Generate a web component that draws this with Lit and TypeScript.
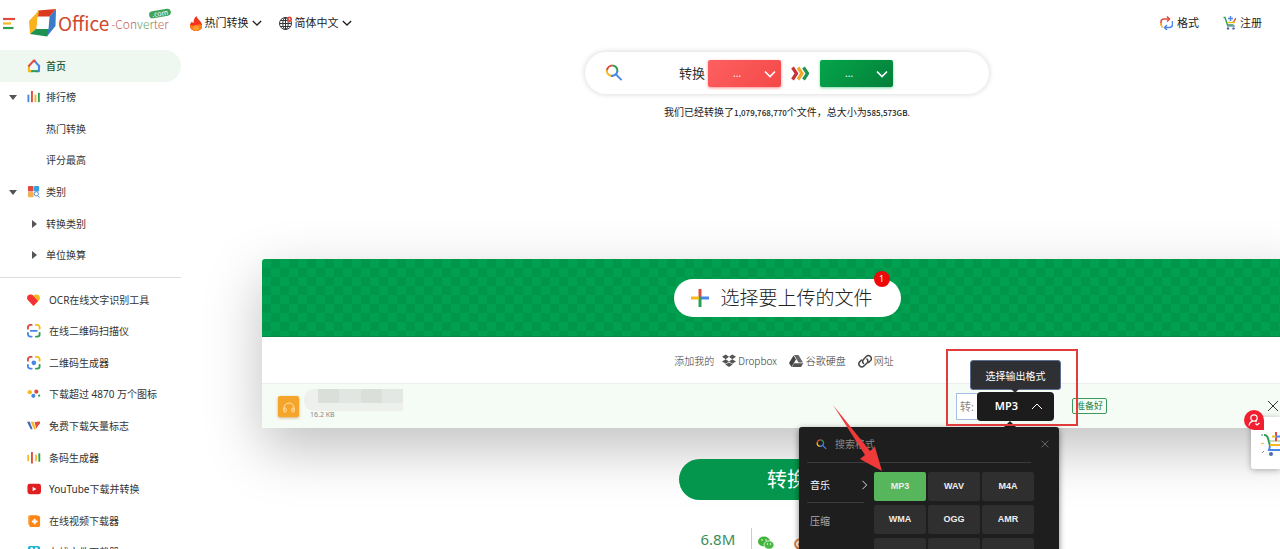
import { LitElement, html, css, svg, type TemplateResult } from "lit";
import { customElement, property, state } from "lit/decorators.js";
import { classMap } from "lit/directives/class-map.js";

const RED = "#e04a3f";
const YELLOW = "#f5b81f";
const GREEN = "#2f9e52";
const BLUE = "#4a86e8";

const icons: Record<string, TemplateResult> = {
  menu: svg`<path d="M0 3h12" stroke=${RED} stroke-width="2.200"/><path d="M0 7.500h8" stroke=${YELLOW} stroke-width="2.200"/><path d="M0 12h10.500" stroke=${GREEN} stroke-width="2.200"/>`,
  fire: svg`<path d="M7.500 0C8 3 12 4.500 13 8.500C14 12 11 15 7 15C3 15 0.500 12 1 9C1.300 7.200 2.300 6.500 3 5.500C3.500 6.500 4 7 4.600 7C4.500 4 5.500 1.500 7.500 0Z" fill="#f4351c"/><path d="M1 9C2.500 9.500 4 10 6 9.500C8.500 9 9.500 8 13 9C14 12 11 15 7 15C3 15 0.700 12.500 1 9Z" fill="#ff7a1a"/><ellipse cx="7" cy="12" rx="3" ry="2.500" fill="#ff9d2e"/>`,
  globe: svg`<g fill="none" stroke="#333" stroke-width="1"><circle cx="6.500" cy="7.500" r="6"/><ellipse cx="6.500" cy="7.500" rx="2.700" ry="6"/><path d="M.5 7.500h12M6.500 1.500v12M1.500 4.500h10M1.500 10.500h10"/></g><circle cx="10.500" cy="3" r="2.500" fill="${RED}"/><path d="M8.500 4l2 3l2-3z" fill="${RED}"/><circle cx="10.500" cy="3" r=".8" fill="#fff"/>`,
  home: svg`<g fill="none" stroke-width="2.200" stroke-linejoin="round"><path d="M12.800 7.500V13H10" stroke="${BLUE}"/><path d="M7.500 1.500L13 7.500V9" stroke="${BLUE}"/><path d="M11.500 13H3" stroke="${GREEN}"/><path d="M2 7V13H4.500" stroke="${YELLOW}"/><path d="M1.500 8L7.500 1.500L9 3" stroke="${RED}"/></g>`,
  bars: svg`<path d="M1.500 5v8" stroke="${BLUE}" stroke-width="2"/><path d="M5.300 1v12" stroke="${RED}" stroke-width="2"/><path d="M9 5v8" stroke="${YELLOW}" stroke-width="2"/><path d="M12.700 3v10" stroke="${GREEN}" stroke-width="2"/>`,
  grid: svg`<rect x="1" y="1" width="6" height="6" rx="1" fill="${RED}"/><rect x="7.500" y="1" width="5.500" height="6" rx="1" fill="#36a3e0"/><rect x="1" y="7.500" width="6" height="5.500" rx="1" fill="#f2b053"/><circle cx="10" cy="9.500" r="2.300" fill="#fff" stroke="#4a86c8"/><path d="M11.500 11.500l2 2" stroke="#4a86c8"/>`,
  heart: svg`<path d="M7 14L1 7.500C-1 4.500 1 1.500 4 1.500C5.500 1.500 6.500 2.300 7 3C8 1.800 9 1.500 10.300 1.500C13.500 1.500 15 5 13 7.500Z" fill="#f4b81f"/><path d="M7 14L1 7.500C-1 4.500 1 1.500 4 1.500C5.500 1.500 6.500 2.300 7 3.500L11.800 8.500Z" fill="#f72f38"/>`,
  scan: svg`<g fill="none" stroke-width="2" stroke-linecap="round"><path d="M1 5V3.500A2.500 2.500 0 0 1 3.500 1H5" stroke="${RED}"/><path d="M9.500 1H11A2.500 2.500 0 0 1 13.500 3.500V5" stroke="${YELLOW}"/><path d="M1 9.500V11A2.500 2.500 0 0 0 3.500 13.500H5" stroke="${BLUE}"/><path d="M9.500 13.500H11A2.500 2.500 0 0 0 13.500 11V9.500" stroke="${GREEN}"/><path d="M4 7.300h6.500" stroke="${BLUE}"/></g>`,
  lens: svg`<g fill="none" stroke-width="2" stroke-linecap="round"><path d="M1 5V3.500A2.500 2.500 0 0 1 3.500 1H5" stroke="${RED}"/><path d="M9.500 1H11A2.500 2.500 0 0 1 13.500 3.500V5" stroke="${YELLOW}"/><path d="M1 9.500V11A2.500 2.500 0 0 0 3.500 13.500H5" stroke="${BLUE}"/><path d="M9.500 13.500H11A2.500 2.500 0 0 0 13.500 11V9.500" stroke="${GREEN}"/></g><circle cx="7.300" cy="7.300" r="2.500" fill="${BLUE}"/>`,
  dots: svg`<circle cx="3" cy="5.500" r="2.300" fill="${YELLOW}"/><circle cx="10" cy="5" r="2.200" fill="${RED}"/><circle cx="6.800" cy="9.500" r="2.200" fill="${BLUE}"/><circle cx="13" cy="9.300" r="1.200" fill="${GREEN}"/>`,
  vector: svg`<path d="M0 3h3l3 8H4z" fill="#3f66b8"/><path d="M4 3h3l2.500 8H7.500z" fill="${YELLOW}"/><path d="M8 3c2 1 3-1 6 0c.5 2-1 3-2 4l-2 3.500z" fill="${RED}"/>`,
  barcode: svg`<path d="M1.300 4v7M9.700 4v7" stroke="${YELLOW}" stroke-width="1.800"/><path d="M5.300 1v12.500" stroke="${RED}" stroke-width="2"/><path d="M13.200 2.500v9" stroke="${GREEN}" stroke-width="2"/>`,
  youtube: svg`<rect x=".5" y="2" width="14.500" height="11" rx="2.500" fill="#e02020"/><path d="M6 5l4 2.500L6 10z" fill="#fff"/>`,
  download: svg`<rect x="1" y="1" width="11" height="11" rx="2" fill="#f8b36a"/><rect x="2.500" y="2" width="11.500" height="12" rx="2" fill="#ff8410"/><path d="M8.200 5v6M5.200 8h6" stroke="#fff" stroke-width="2"/>`,
  cyan: svg`<rect x="1" y="1" width="13" height="13" rx="2" fill="#1fb5d6"/><circle cx="5" cy="4" r="1.500" fill="#fff"/><circle cx="10" cy="4" r="1.500" fill="#fff"/><path d="M4 9h7" stroke="#fff" stroke-width="2"/>`,
  cycle: svg`<g fill="none" stroke-width="1.500"><path d="M1 9V6a3 3 0 0 1 3-3h5" stroke="${RED}"/><path d="M7 .5L9.500 3L7 5.500" stroke="${RED}"/><path d="M1 7v2l1.500 2.500" stroke="${YELLOW}"/><path d="M12.500 5v3.500a3 3 0 0 1-3 3H5" stroke="${BLUE}"/><path d="M7 9L4.500 11.500L7 14" stroke="${BLUE}"/></g>`,
  cart: svg`<g fill="none" stroke-width="1.400"><path d="M.5 1.500h1.500L4.500 9h6" stroke="${GREEN}"/><path d="M4 6.500h8" stroke="${YELLOW}"/><path d="M10.500 6L13 2" stroke="${RED}"/><path d="M7.500 0v5M5 2.500h5" stroke="${BLUE}"/><path d="M4 10h8" stroke="#6c8fb5"/></g><circle cx="5" cy="12.500" r="1.200" fill="#4f6f9c"/><circle cx="10.500" cy="12.500" r="1.200" fill="#4f6f9c"/>`,
  bigCart: svg`<g fill="none" stroke-width="2"><path d="M3 2C7 2 7 5 9 13" stroke="${GREEN}"/><path d="M8 8h16" stroke="#9bb36a" stroke-width="1"/><path d="M9 12h16" stroke="${YELLOW}"/><path d="M9 13l-1 4h18" stroke="${BLUE}"/><path d="M15 -1v9" stroke="${RED}"/><path d="M11 3.500h4" stroke="${YELLOW}"/><path d="M15 3.500h5" stroke="${BLUE}"/></g><circle cx="10" cy="21" r="2" fill="#466fae"/><circle cx="22" cy="21" r="2" fill="#466fae"/><path d="M0 2h2" stroke="${GREEN}"/><path d="M0 11l3-1" stroke="${YELLOW}"/><path d="M1 20l2-2" stroke="#7d93b5"/>`,
  search: svg`<g fill="none" stroke-width="2.200"><path d="M2 7A6 6 0 0 1 8 1.500" stroke="${RED}"/><path d="M8 1.500A5.500 5.500 0 0 1 13 8" stroke="${GREEN}"/><path d="M13 7.500A5.500 5.500 0 0 1 6 12.300" stroke="${BLUE}"/><path d="M6.500 12.500A5.500 5.500 0 0 1 2 6.500" stroke="${YELLOW}"/><path d="M11.500 11L17.500 17" stroke="${BLUE}" stroke-width="2"/></g>`,
  arrows: svg`<g fill="none" stroke-width="3.200"><path d="M1.500 1.500l4 6l-4 6" stroke="#c8323c"/><path d="M7 1.500l4 6l-4 6" stroke="#f0a82a"/><path d="M12.500 1.500l4 6l-4 6" stroke="#1f9150"/></g>`,
  plus: svg`<g stroke-width="3"><path d="M9 0v9" stroke="${RED}"/><path d="M18 9H9" stroke="${BLUE}"/><path d="M9 18V8" stroke="${GREEN}"/><path d="M0 9h8" stroke="${YELLOW}"/></g>`,
  dropbox: svg`<path d="M4 0L7.500 2.500L4 5L0 2.500zM11 0L7.500 2.500L11 5L15 2.500zM0 7.500L4 5L7.500 7.500L4 10zM15 7.500L11 5L7.500 7.500L11 10zM3.500 10.800L7.500 8.500L11.500 10.800L7.500 13.500z" fill="#555"/>`,
  drive: svg`<path d="M5 1h4.500l4.500 7.500H9.500z" fill="#666"/><path d="M4.500 1.500L7 5.500L2.500 13L0 9z" fill="#444"/><path d="M5 9.300h9.300L12 13H3z" fill="#555"/>`,
  link: svg`<g fill="none" stroke="#444" stroke-width="1.500" stroke-linecap="round"><path d="M5.500 9.500a3 3 0 0 1 0-4L8.500 2.300a3 3 0 0 1 4.200 4.200L10.500 8.500"/><path d="M9 5a3 3 0 0 1 0 4L5.700 12.200A3 3 0 0 1 1.500 8L3.500 6"/></g>`,
  headphones: svg`<path d="M3 11V9a5 5 0 0 1 10 0v2" fill="none" stroke="#ffe2b0" stroke-width="1"/><rect x="2.800" y="9" width="2.300" height="4" rx="1" fill="none" stroke="#ffe2b0"/><rect x="10.900" y="9" width="2.300" height="4" rx="1" fill="none" stroke="#ffe2b0"/>`,
  user: svg`<g fill="none" stroke="#fff" stroke-width="1.200"><circle cx="7" cy="5" r="3.200"/><path d="M2 12.500C2.500 10 4 8.500 6 8.200M8.500 8L9.500 9M8.500 10.500l1.500 1.500l2.500-2"/></g>`,
  close: svg`<path d="M1 1l10 10M11 1L1 11" stroke="currentColor" fill="none"/>`,
  down: svg`<path d="M1 3.500l5 5l5-5" stroke="currentColor" stroke-width="1.600" fill="none"/>`,
  up: svg`<path d="M1 9l5-5l5 5" stroke="currentColor" fill="none"/>`,
  right: svg`<path d="M3 1l5 5l-5 5" stroke="currentColor" fill="none"/>`,
  caretDown: svg`<path d="M0 1h8L4 6z" fill="#555"/>`,
  caretRight: svg`<path d="M1 0v8l5-4z" fill="#555"/>`,
  logo: svg`<path d="M9 1.500L27 0L20.500 7.500H8z" fill="#d93a20"/><path d="M10 1.500L9 8L7.500 19.500L1 25L0 12z" fill="#f9b21c"/><path d="M27 0L26.500 17L18 27.500V20L20.500 7.500z" fill="#3a7bc8"/><path d="M1 25L7.500 19.500H19.500L18 27.500z" fill="#1f9150"/><path d="M8.500 8H20.500L19.500 20H7.500z" fill="#fff"/>`,
  wechat: svg`<ellipse cx="6" cy="5.500" rx="6" ry="5" fill="#3fb33a"/><ellipse cx="11" cy="9" rx="5" ry="4.200" fill="#49b944" stroke="#fff" stroke-width=".7"/><circle cx="4" cy="4" r=".8" fill="#fff"/><circle cx="8" cy="4" r=".8" fill="#fff"/><circle cx="9.500" cy="8" r=".7" fill="#fff"/><circle cx="12.500" cy="8" r=".7" fill="#fff"/>`,
  weibo: svg`<ellipse cx="7" cy="8" rx="6" ry="5" fill="none" stroke="#e0803a" stroke-width="2"/><circle cx="6" cy="8.500" r="2" fill="#e0803a"/><path d="M8 1a5 5 0 0 1 6 5" fill="none" stroke="#e0803a" stroke-width="1.500"/>`,
};

const icon = (name: string, width: number, height: number, box = `0 0 ${width} ${height}`) =>
  html`<svg class="icon" width=${width} height=${height} viewBox=${box} aria-hidden="true">${icons[name]}</svg>`;

interface NavItem {
  label: string;
  icon?: string;
  caret?: "down" | "right";
  active?: boolean;
}

const mainNav: NavItem[] = [
  { label: "首页", icon: "home", active: true },
  { label: "排行榜", icon: "bars", caret: "down" },
  { label: "热门转换" },
  { label: "评分最高" },
  { label: "类别", icon: "grid", caret: "down" },
  { label: "转换类别", caret: "right" },
  { label: "单位换算", caret: "right" },
];

const toolNav: NavItem[] = [
  { label: "OCR在线文字识别工具", icon: "heart" },
  { label: "在线二维码扫描仪", icon: "scan" },
  { label: "二维码生成器", icon: "lens" },
  { label: "下载超过 4870 万个图标", icon: "dots" },
  { label: "免费下载矢量标志", icon: "vector" },
  { label: "条码生成器", icon: "barcode" },
  { label: "YouTube下载并转换", icon: "youtube" },
  { label: "在线视频下载器", icon: "download" },
  { label: "在线文件下载器", icon: "cyan" },
];

const base = css`
  * { box-sizing: border-box; }
  a { color: inherit; text-decoration: none; }
  button, input, select { font: inherit; color: inherit; border: 0; padding: 0; margin: 0; background: none; }
  button, select { cursor: pointer; }
  .icon { display: block; flex: none; }
`;

@customElement("site-header")
class SiteHeader extends LitElement {
  static styles = [base, css`
    :host { display: block; }
    .bar { display: flex; align-items: center; height: 46px; padding: 0 18px 0 3px; font-size: 11px; color: #222; }
    .logo { position: relative; display: flex; align-items: center; margin-left: 14px; font-family: "Noto Sans CJK SC", sans-serif; }
    .name { margin-left: 2px; font-size: 19px; line-height: 28px; color: #cf4a2c; }
    .tail { margin: 2px 0 0 2px; font-size: 12px; font-weight: 300; color: #c4665a; }
    .tail b { font-weight: 300; color: #5ba268; }
    .com { position: absolute; right: -2px; top: 1px; padding: 0 3px; border-radius: 4px; background: #43a35b; color: #fff; font-size: 7px; line-height: 7px; transform: rotate(-10deg); }
    .link { display: flex; align-items: center; gap: 3px; }
    .hot { margin-left: 20px; }
    .lang { margin-left: 17px; }
    .formats { margin-left: auto; gap: 4px; }
    .join { margin-left: 24px; gap: 4px; }
  `];
  render() {
    return html`
      <header class="bar">
        <button aria-label="菜单">${icon("menu", 12, 14)}</button>
        <a class="logo" href="#">
          ${icon("logo", 27, 28)}
          <span class="name">Office</span>
          <span class="tail">-Con<b>ver</b>ter</span>
          <span class="com">.com</span>
        </a>
        <button class="link hot">${icon("fire", 13, 15)}热门转换${icon("down", 10, 10, "0 0 12 12")}</button>
        <button class="link lang">${icon("globe", 13, 15)}简体中文${icon("down", 10, 10, "0 0 12 12")}</button>
        <a class="link formats" href="#">${icon("cycle", 13, 14)}格式</a>
        <a class="link join" href="#">${icon("cart", 13, 14)}注册</a>
      </header>`;
  }
}

@customElement("side-nav")
class SideNav extends LitElement {
  static styles = [base, css`
    :host { display: block; color: #333; font-size: 10px; }
    .list { display: grid; grid-auto-rows: 1fr; list-style: none; margin: 0; padding: 0; }
    .main { height: 221px; }
    .tools { height: 284px; margin-top: 6px; }
    .row { display: flex; align-items: center; height: 100%; border-radius: 0 16px 16px 0; white-space: nowrap; }
    .caret { width: 27px; padding-left: 9px; }
    .pic { width: 19px; }
    .pic .icon { overflow: visible; }
    .tools .pic { width: 22px; }
    .sub { padding-left: 4px; }
    .active { background: #eef8f0; color: #1c5a30; font-weight: 500; }
    .rule { margin: 6px 0 0; border: 0; border-top: 1px solid #ddd; }
  `];
  private row(item: NavItem) {
    const sub = item.caret === "right";
    return html`<li><a href="#" class=${classMap({ row: true, active: !!item.active })}>
      <span class="caret">${item.caret === "down" ? icon("caretDown", 8, 7) : ""}</span>
      <span class=${classMap({ pic: true, sub })}>${item.icon ? icon(item.icon, 14, 14, "0 0 15 15") : sub ? icon("caretRight", 7, 8) : ""}</span>
      <span>${item.label}</span></a></li>`;
  }
  render() {
    return html`<nav>
      <ul class="list main">${mainNav.map((i) => this.row(i))}</ul>
      <hr class="rule" />
      <ul class="list tools">${toolNav.map((i) => this.row(i))}</ul>
    </nav>`;
  }
}

@customElement("format-popup")
class FormatPopup extends LitElement {
  @property() value = "MP3";
  static styles = [base, css`
    :host { display: block; background: #1e1e1e; color: #fff; border-radius: 3px; box-shadow: 0 2px 6px rgba(0, 0, 0, 0.5); font-size: 10px; }
    .search { display: flex; align-items: center; gap: 8px; height: 35px; margin: 0 10px 0 8px; padding-left: 9px; }
    .search input { flex: 1; min-width: 0; outline: 0; }
    .search input::placeholder { color: #888; }
    .search button { color: #888; }
    .line { height: 1px; margin: 0 28px 9px 8px; background: #3a3a3a; }
    .body { display: grid; grid-template-columns: 57px 162px; gap: 10px; padding-left: 8px; }
    .cat { display: flex; width: 100%; height: 31px; align-items: center; justify-content: space-between; padding: 0 0 4px 3px; border-bottom: 1px solid #3a3a3a; }
    .cat.shut { height: 43px; color: #aaa; border: 0; padding-bottom: 6px; }
    .cat .icon { margin-right: -6px; }
    .grid { display: grid; grid-template-columns: repeat(3, 52px); grid-auto-rows: 29px; gap: 4px 2px; align-content: start; }
    .fmt { background: #2f2f2f; border-radius: 2px; color: #eee; font-family: "Liberation Sans", sans-serif; font-size: 9px; font-weight: 700; }
    .fmt.on { background: #57b55c; }
  `];
  render() {
    const formats = ["MP3", "WAV", "M4A", "WMA", "OGG", "AMR", "AC3", "FLAC", "AIFF"];
    return html`
      <div class="search">${icon("search", 11, 11, "0 0 19 19")}
        <input type="text" placeholder="搜索格式" aria-label="搜索格式" />
        <button aria-label="关闭">${icon("close", 8, 8, "0 0 12 12")}</button>
      </div>
      <div class="line"></div>
      <div class="body">
        <div>
          <button class="cat">音乐${icon("right", 10, 10, "0 0 12 12")}</button>
          <button class="cat shut">压缩</button>
        </div>
        <div class="grid">${formats.map((f) => html`<button class=${classMap({ fmt: true, on: f === this.value })}
          @click=${() => this.dispatchEvent(new CustomEvent("pick", { detail: f }))}>${f}</button>`)}</div>
      </div>`;
  }
}

@customElement("app-root")
class AppRoot extends LitElement {
  @state() private format = "MP3";
  @state() private open = true;

  static styles = [base, css`
    :host { display: block; position: relative; height: 100vh; overflow: hidden; background: #fff; color: #333; font-family: "Noto Sans", "Noto Sans CJK SC", sans-serif; font-size: 10px; line-height: 16px; }
    .shell { display: grid; grid-template-columns: 181px minmax(0, 1fr); padding-top: 4px; }
    .main { display: flex; flex-direction: column; align-items: center; margin: 0 -32px 0 81px; }
    .finder { display: flex; align-items: center; width: 404px; height: 42px; margin-top: 2px; padding-left: 20px; border-radius: 21px; background: #fff; box-shadow: 0 0 5px 1px rgba(0, 0, 0, 0.13); }
    .finder label { margin-left: 56px; font-size: 13px; }
    .pick { position: relative; display: flex; margin-left: 3px; color: #fff; }
    .pick select { appearance: none; width: 73px; height: 27px; padding-left: 25px; border-radius: 2px; font-size: 10px; color: #fff; }
    .pick .icon { position: absolute; right: 5px; top: 8px; pointer-events: none; }
    .from select { background: linear-gradient(135deg, #fc6060, #f54848); box-shadow: 0 1px 3px #fa8a8a; }
    .to select { background: linear-gradient(135deg, #05a54b, #048039); box-shadow: 0 1px 3px #79d9a2; }
    .mid { margin-left: 10px; }
    .to { margin-left: 11px; }
    .totals { height: 16px; margin: 10px 0 0; color: #222; }
    .totals b { font-family: "Noto Sans CJK SC", sans-serif; font-size: 8px; font-weight: 500; }
    .card { align-self: stretch; margin-top: 139px; border-radius: 3px 3px 0 0; background: #fff; box-shadow: 0 20px 56px rgba(0, 0, 0, 0.25); }
    .band { display: flex; align-items: center; justify-content: center; height: 78px; border-radius: 3px 3px 0 0; background: repeating-conic-gradient(#00974a 0 25%, #00a050 0 50%) 0 0 / 18px 18px; border-bottom: 1px solid #078a45; }
    .upload { position: relative; display: flex; align-items: center; gap: 12px; width: 227px; height: 38px; padding-left: 17px; border-radius: 19px; background: #fff; color: #222; font-size: 19px; font-weight: 300; white-space: nowrap; }
    .count { position: absolute; right: 11px; top: -8px; width: 16px; height: 16px; border-radius: 8px; background: #ee0808; color: #fff; font-size: 9px; font-weight: 400; line-height: 16px; text-align: center; }
    .sources { display: flex; align-items: center; justify-content: center; height: 46px; padding: 2px 6px 0 0; gap: 12px; color: #333; font-family: "Noto Sans CJK SC", sans-serif; font-size: 10px; font-weight: 300; }
    .sources a { display: flex; align-items: center; gap: 2px; }
    .sources span { margin-right: -4px; }
    .file { display: grid; grid-template-columns: 22px minmax(0, 1fr) 98px 213px 45px; align-items: center; height: 45px; padding-left: 16px; border-top: 1px solid #eaf1eb; background: #f5fcf6; }
    .tile { display: grid; place-items: center; width: 21px; height: 21px; border-radius: 2px; background: #f5a42c; box-shadow: 0 1px 3px rgba(190, 120, 20, 0.6); }
    .meta { align-self: start; padding-left: 4px; }
    .mask { display: flex; height: 22px; width: 99px; margin-top: 5px; border-radius: 10px 0 0 10px; background: #edf0ed; overflow: hidden; }
    .mask i { height: 14px; flex: 1; background: #dadfda; }
    .mask i:first-child { flex: none; width: 14px; background: none; }
    .mask i:nth-child(3) { background: #e2e6e2; }
    .mask i:last-child { background: #e4e8e5; }
    .size { margin: 0 0 0 6px; font-size: 7px; line-height: 8px; color: #888; }
    .output { position: relative; display: flex; height: 29px; align-items: center; }
    .lead { width: 22px; height: 27px; padding-left: 3px; border: 1px solid #a4c0e0; background: #fff; color: #888; font-size: 11px; line-height: 25px; }
    .toggle { display: flex; align-items: center; justify-content: flex-end; gap: 13px; width: 77px; height: 29px; margin-left: -1px; padding-right: 11px; border-radius: 4px; background: #1c1c1c; color: #fff; font-size: 11px; font-weight: 600; }
    .tip { position: absolute; right: -7px; top: -32px; width: 91px; height: 30px; border-radius: 3px; border: 1px solid #5c6f90; background: #2f3034; color: #fff; font-size: 10px; line-height: 30px; text-align: center; }
    .tip::after { content: ""; position: absolute; left: 40px; top: 28px; border: 4px solid transparent; border-top-color: #2f3034; border-bottom: 0; }
    .notch { position: absolute; right: 38px; top: 29px; border: 6px solid transparent; border-bottom-color: #1e1e1e; border-top: 0; }
    .popup { position: absolute; z-index: 1; right: -5px; top: 35px; width: 260px; height: 180px; }
    .frame { position: absolute; z-index: 2; left: -10px; top: -43px; width: 132px; height: 77px; border: 2px solid #e23b3b; pointer-events: none; }
    .pointer { position: absolute; z-index: 2; left: -124px; top: 12px; pointer-events: none; }
    .ready { justify-self: start; margin-left: 18px; padding: 0 3px; border: 1px solid #3c9a5c; border-radius: 2px; color: #1d8140; font-size: 9px; line-height: 14px; }
    .remove { justify-self: start; color: #333; }
    .convert { width: 216px; height: 41px; margin-top: 31px; border-radius: 21px; background: #04964c; color: #fff; font-size: 20px; }
    .social { display: flex; align-items: flex-start; width: 173px; margin-top: 28px; }
    .shares { width: 37px; color: #3c8e58; font-size: 15px; line-height: 23px; white-space: nowrap; }
    .shares small { display: block; font-size: 9px; line-height: 9px; color: #444; margin-top: -2px; }
    .split { width: 1px; height: 40px; margin: 0 6px 0 13px; background: #ccc; }
    .social .icon { margin: 8px 19px 0 0; }
    .promo { position: absolute; right: 0; top: 417px; width: 29px; height: 52px; padding: 16px 0 0 10px; border-radius: 3px 0 0 3px; background: #fff; box-shadow: 0 1px 6px rgba(0, 0, 0, 0.3); }
    .promo > .icon { overflow: visible; }
    .account { position: absolute; left: -7px; top: -7px; display: grid; place-items: center; width: 20px; height: 20px; border-radius: 10px 10px 0 10px; background: #f02030; }
  `];

  render() {
    return html`
      <site-header></site-header>
      <div class="shell">
        <side-nav></side-nav>
        <main class="main">
          <div class="finder">
            ${icon("search", 18, 18, "0 0 19 19")}
            <label for="from">转换</label>
            <span class="pick from"><select id="from"><option>...</option></select>${icon("down", 12, 12)}</span>
            <span class="mid">${icon("arrows", 18, 15)}</span>
            <span class="pick to"><select aria-label="目标格式"><option>...</option></select>${icon("down", 12, 12)}</span>
          </div>
          <p class="totals">我们已经转换了<b>1,079,768,770</b>个文件，总大小为<b>585,573GB.</b></p>
          <section class="card">
            <div class="band">
              <button class="upload">${icon("plus", 18, 18)}选择要上传的文件<span class="count">1</span></button>
            </div>
            <div class="sources">
              <span>添加我的</span>
              <a href="#">${icon("dropbox", 14, 14, "0 0 15 14")}Dropbox</a>
              <a href="#">${icon("drive", 15, 14)}谷歌硬盘</a>
              <a href="#">${icon("link", 14, 14)}网址</a>
            </div>
            <div class="file">
              <div class="tile">${icon("headphones", 15, 15)}</div>
              <div class="meta">
                <div class="mask"><i></i><i></i><i></i><i></i><i></i></div>
                <p class="size">16.2 KB</p>
              </div>
              <div class="output">
                <span class="lead">转:</span>
                <button class="toggle" aria-expanded=${this.open} @click=${() => (this.open = !this.open)}>${this.format}${icon("up", 12, 12)}</button>
                <div class="tip" role="tooltip">选择输出格式</div>
                ${this.open ? html`<span class="notch"></span>
                  <format-popup class="popup" .value=${this.format} @pick=${(e: CustomEvent) => (this.format = e.detail)}></format-popup>` : ""}
                <div class="frame"></div>
                <svg class="pointer" width="52" height="68" viewBox="0 0 52 68" aria-hidden="true"><path d="M1 1L38 47L43 43L50 67L28 55L33 51Z" fill="#f03a3a"/></svg>
              </div>
              <span class="ready">准备好</span>
              <button class="remove" aria-label="移除">${icon("close", 12, 12)}</button>
            </div>
          </section>
          <button class="convert">转换</button>
          <div class="social">
            <div class="shares">6.8M<small>分享次数</small></div>
            <div class="split"></div>
            ${icon("wechat", 17, 14)}${icon("weibo", 15, 14)}
          </div>
        </main>
      </div>
      <aside class="promo">
        ${icon("bigCart", 26, 24)}
        <button class="account" aria-label="账户">${icon("user", 14, 14)}</button>
      </aside>`;
  }
}
